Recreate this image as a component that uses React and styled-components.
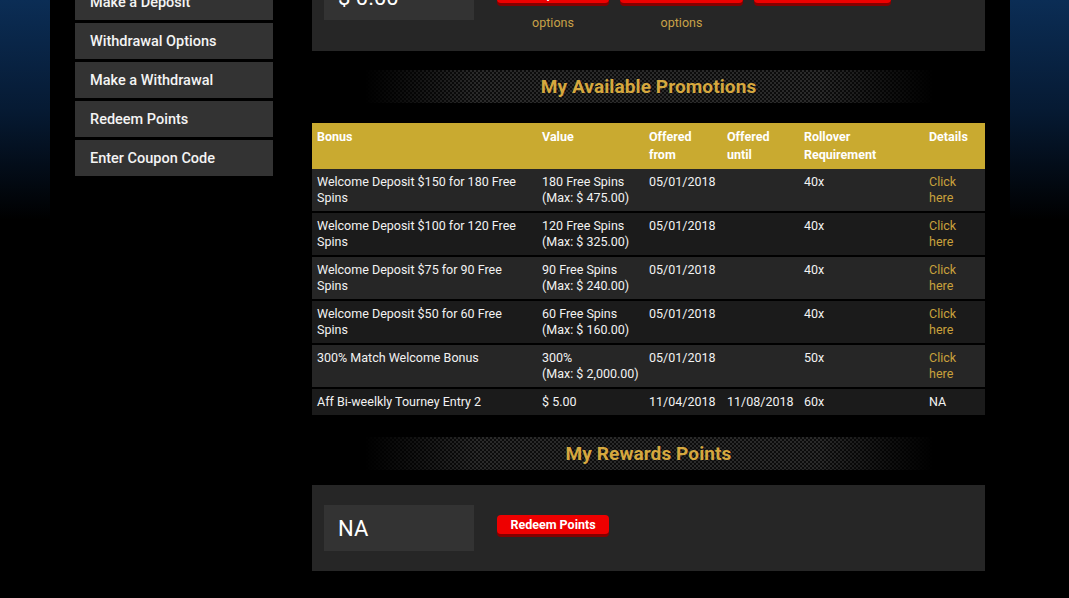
import React from 'react';
import styled, { createGlobalStyle } from 'styled-components';

const GlobalStyle = createGlobalStyle`
    html, body {
        margin: 0;
        padding: 0;
        background: #000;
        overflow: hidden;
    }
    body {
        font-family: Roboto, "Open Sans", Arial, sans-serif;
        color: #fff;
    }
`
const Page = styled.div`
    display: flex;
    padding-left: 50px;
    min-height: 598px;
    background:
        linear-gradient(to bottom, #0b2d55 0px, #061a33 110px, #000 220px) left top / 50px 100% no-repeat,
        linear-gradient(to bottom, #0b2d55 0px, #061a33 110px, #000 220px) right top / 59px 100% no-repeat,
        #000;
`
const Wrapper = styled.div`
    width: 960px;
    display: flex;
    gap: 39px;
    padding: 0 25px;
    margin-top: -46px;
    box-sizing: border-box;
`
const Sidebar = styled.div`
    width: 198px;
    flex-shrink: 0;
    display: flex;
    flex-direction: column;
    gap: 3px;
    padding-top: 30px;
`
const SideItem = styled.div`
    height: 36px;
    background: #333;
    display: flex;
    align-items: center;
    padding-left: 15px;
    font-size: 14.5px;
    font-weight: 500;
    color: #f4f4f4;
    cursor: pointer;
`
const Main = styled.div`
    flex: 1;
    display: flex;
    flex-direction: column;
`
const Panel = styled.div`
    background: #262626;
    padding: 20px 12px ${p => p.$bottom || 20}px;
    display: flex;
    align-items: flex-start;
    gap: 23px;
`
const ValueBox = styled.div`
    width: 150px;
    height: 46px;
    background: #333;
    display: flex;
    align-items: center;
    padding-left: 14px;
    box-sizing: border-box;
    font-size: 22px;
    color: #fff;
`
const Buttons = styled.div`
    display: flex;
    gap: 11px;
    padding-top: 10px;
`
const BtnCol = styled.div`
    display: flex;
    flex-direction: column;
    align-items: center;
    width: ${p => p.$w}px;
`
const RedButton = styled.button`
    width: ${p => p.$w ? p.$w + 'px' : 'auto'};
    height: 19px;
    padding: 0 12px;
    background: #ee0000;
    border: none;
    border-radius: 4px;
    box-shadow: 0 3px 0 #850000;
    color: #fff;
    font-family: Roboto, Arial, sans-serif;
    font-weight: 700;
    font-size: 12.5px;
    cursor: pointer;
`
const Hint = styled.span`
    margin-top: 12px;
    font-size: 12.5px;
    line-height: 15px;
    color: #c9a248;
`
const SectionTitle = styled.div`
    margin: ${p => p.$top}px auto ${p => p.$bottom}px;
    width: 570px;
    height: 33px;
    display: flex;
    align-items: center;
    justify-content: center;
    position: relative;
    h2 {
        position: relative;
        margin: 0;
        font-size: 19px;
        font-weight: 700;
        color: #d6a83e;
        letter-spacing: 0.1px;
    }
    &::before {
        content: '';
        position: absolute;
        inset: 0;
        background: repeating-conic-gradient(#2a2a2a 0 25%, #0c0c0c 0 50%) 0 0 / 4px 4px;
        -webkit-mask-image: linear-gradient(to right, transparent 0%, #000 20%, #000 80%, transparent 100%);
        mask-image: linear-gradient(to right, transparent 0%, #000 20%, #000 80%, transparent 100%);
    }
`
const Table = styled.table`
    width: 100%;
    border-collapse: collapse;
    font-size: 12.5px;
    line-height: 16px;
    table-layout: fixed;
    th {
        background: #c9aa30;
        color: #fff;
        font-weight: 700;
        text-align: left;
        vertical-align: top;
        padding: 5px 5px 5px;
        line-height: 18px;
    }
    td {
        vertical-align: top;
        padding: 5px 5px 5px;
        color: #f2f2f2;
    }
    tbody tr {
        border-bottom: 2px solid #000;
    }
    tbody tr:nth-child(odd) { background: #262626; }
    tbody tr:nth-child(even) { background: #1b1b1b; }
    tbody tr:last-child { border-bottom: none; }
`
const Link = styled.a`
    color: #c9a13c;
    text-decoration: none;
    cursor: pointer;
`

const promos = [
    ['Welcome Deposit $150 for 180 Free Spins', ['180 Free Spins', '(Max: $ 475.00)'], '05/01/2018', '', '40x', true],
    ['Welcome Deposit $100 for 120 Free Spins', ['120 Free Spins', '(Max: $ 325.00)'], '05/01/2018', '', '40x', true],
    ['Welcome Deposit $75 for 90 Free Spins', ['90 Free Spins', '(Max: $ 240.00)'], '05/01/2018', '', '40x', true],
    ['Welcome Deposit $50 for 60 Free Spins', ['60 Free Spins', '(Max: $ 160.00)'], '05/01/2018', '', '40x', true],
    ['300% Match Welcome Bonus', ['300%', '(Max: $ 2,000.00)'], '05/01/2018', '', '50x', true],
    ['Aff Bi-weelkly Tourney Entry 2', ['$ 5.00'], '11/04/2018', '11/08/2018', '60x', false],
]

export default function App() {
    return (
        <Page>
            <GlobalStyle />
            <Wrapper>
                <Sidebar>
                    <SideItem>Make a Deposit</SideItem>
                    <SideItem>Withdrawal Options</SideItem>
                    <SideItem>Make a Withdrawal</SideItem>
                    <SideItem>Redeem Points</SideItem>
                    <SideItem>Enter Coupon Code</SideItem>
                </Sidebar>
                <Main>
                    <Panel $bottom={21}>
                        <ValueBox>$ 0.00</ValueBox>
                        <Buttons>
                            <BtnCol $w={112}>
                                <RedButton $w={112}>Deposit</RedButton>
                                <Hint>options</Hint>
                            </BtnCol>
                            <BtnCol $w={123}>
                                <RedButton $w={123}>Withdraw</RedButton>
                                <Hint>options</Hint>
                            </BtnCol>
                            <BtnCol $w={137}>
                                <RedButton $w={137}>Redeem Points</RedButton>
                            </BtnCol>
                        </Buttons>
                    </Panel>

                    <SectionTitle $top={19} $bottom={20}><h2>My Available Promotions</h2></SectionTitle>

                    <Table>
                        <colgroup>
                            <col style={{ width: 225 }} />
                            <col style={{ width: 107 }} />
                            <col style={{ width: 78 }} />
                            <col style={{ width: 77 }} />
                            <col style={{ width: 125 }} />
                            <col style={{ width: 61 }} />
                        </colgroup>
                        <thead>
                            <tr>
                                <th>Bonus</th>
                                <th>Value</th>
                                <th>Offered from</th>
                                <th>Offered until</th>
                                <th>Rollover Requirement</th>
                                <th>Details</th>
                            </tr>
                        </thead>
                        <tbody>
                            {promos.map((p, i) => (
                                <tr key={i}>
                                    <td>{p[0]}</td>
                                    <td>{p[1].map((l, j) => <div key={j}>{l}</div>)}</td>
                                    <td>{p[2]}</td>
                                    <td>{p[3]}</td>
                                    <td>{p[4]}</td>
                                    <td>{p[5] ? <Link>Click here</Link> : 'NA'}</td>
                                </tr>
                            ))}
                        </tbody>
                    </Table>

                    <SectionTitle $top={22} $bottom={15}><h2>My Rewards Points</h2></SectionTitle>

                    <Panel>
                        <ValueBox>NA</ValueBox>
                        <Buttons>
                            <RedButton $w={112}>Redeem Points</RedButton>
                        </Buttons>
                    </Panel>
                </Main>
            </Wrapper>
        </Page>
    )
}
